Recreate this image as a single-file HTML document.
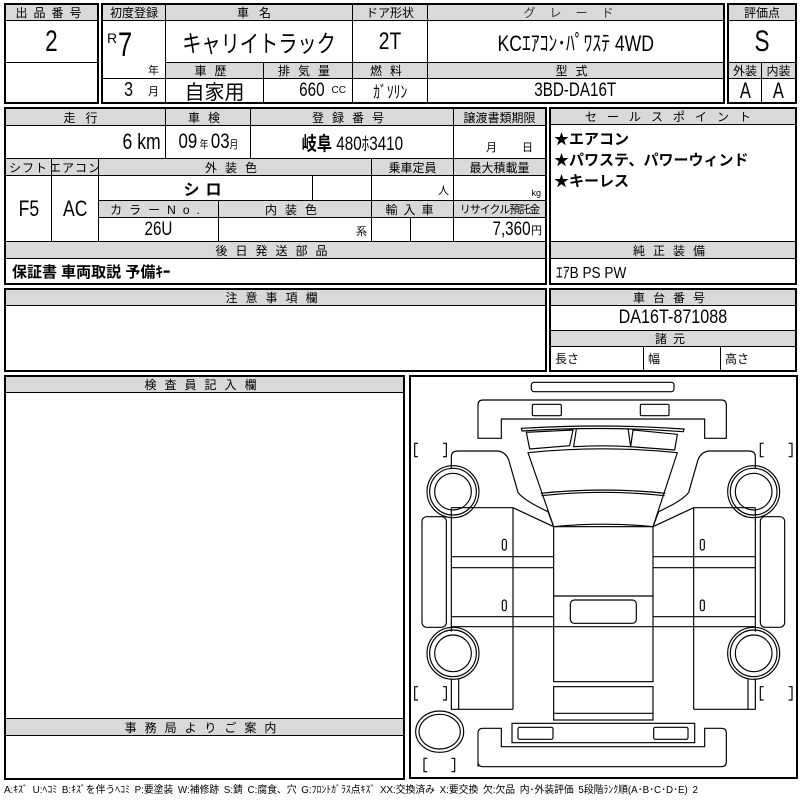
<!DOCTYPE html>
<html><head><meta charset="utf-8">
<style>
*{margin:0;padding:0;box-sizing:border-box}
body{width:800px;height:800px;background:#fff;position:relative;overflow:hidden;font-family:"Liberation Sans","Noto Sans CJK JP",sans-serif;color:#000}
.c{position:absolute;border:1px solid #000;display:flex;align-items:center;justify-content:center;white-space:nowrap;overflow:hidden}
.h{background:#d9d9d9;font-size:12px;letter-spacing:3px}
.o{position:absolute;border:2px solid #000;pointer-events:none}
</style></head><body>

<div class="c h" style="left:5px;top:4px;width:93px;height:17px;letter-spacing:6px">出品番号</div>
<div class="c" style="left:5px;top:20px;width:93px;height:43px;font-size:30px"><span style="transform:scaleX(.75);display:inline-block">2</span></div>
<div class="c" style="left:5px;top:62px;width:93px;height:41px"></div>
<div class="o" style="left:4px;top:3px;width:95px;height:101px"></div>

<div class="c h" style="left:102px;top:4px;width:64px;height:17px;letter-spacing:0">初度登録</div>
<div class="c h" style="left:165px;top:4px;width:188px;height:17px;letter-spacing:10px">車名</div>
<div class="c h" style="left:352px;top:4px;width:76px;height:17px;letter-spacing:0">ドア形状</div>
<div class="c h" style="left:427px;top:4px;width:297px;height:17px;letter-spacing:14px;color:#333">グレード</div>
<div class="c" style="left:102px;top:20px;width:64px;height:59px;border-bottom:none"></div>
<div style="position:absolute;left:107px;top:30px;font-size:14px">R</div>
<div style="position:absolute;left:118px;top:26px;font-size:34px;transform:scaleX(.75);transform-origin:left">7</div>
<div style="position:absolute;left:148px;top:62px;font-size:11px">年</div>
<div class="c" style="left:165px;top:20px;width:188px;height:43px;font-size:24px"><span style="transform:scaleX(.8);display:inline-block">キャリイトラック</span></div>
<div class="c" style="left:352px;top:20px;width:76px;height:43px;font-size:24px"><span style="transform:scaleX(.8);display:inline-block">2T</span></div>
<div class="c" style="left:427px;top:20px;width:297px;height:43px;font-size:22px"><span style="transform:scaleX(.8);display:inline-block">KCｴｱｺﾝ･ﾊﾟﾜｽﾃ 4WD</span></div>
<div class="c h" style="left:165px;top:62px;width:99px;height:17px;letter-spacing:8px">車歴</div>
<div class="c h" style="left:263px;top:62px;width:90px;height:17px;letter-spacing:8px">排気量</div>
<div class="c h" style="left:352px;top:62px;width:76px;height:17px;letter-spacing:8px">燃料</div>
<div class="c h" style="left:427px;top:62px;width:297px;height:17px;letter-spacing:8px">型式</div>
<div class="c" style="left:102px;top:78px;width:64px;height:25px;justify-content:flex-end;padding-right:6px"><span style="font-size:20px;margin-right:14px;transform:scaleX(.8);display:inline-block">3</span><span style="font-size:11px">月</span></div>
<div class="c" style="left:165px;top:78px;width:99px;height:25px;font-size:20px">自家用</div>
<div class="c" style="left:263px;top:78px;width:90px;height:25px;justify-content:flex-end;padding-right:6px"><span style="font-size:19px;transform:scaleX(.8);display:inline-block">660</span><span style="font-size:10px;margin-left:4px">CC</span></div>
<div class="c" style="left:352px;top:78px;width:76px;height:25px;font-size:17px"><span style="transform:scaleX(.8);display:inline-block">ｶﾞｿﾘﾝ</span></div>
<div class="c" style="left:427px;top:78px;width:297px;height:25px;font-size:19px"><span style="transform:scaleX(.8);display:inline-block">3BD-DA16T</span></div>
<div class="o" style="left:101px;top:3px;width:624px;height:101px"></div>

<div class="c h" style="left:728px;top:4px;width:68px;height:17px;letter-spacing:0">評価点</div>
<div class="c" style="left:728px;top:20px;width:68px;height:43px;font-size:30px"><span style="transform:scaleX(.75);display:inline-block">S</span></div>
<div class="c h" style="left:728px;top:62px;width:34px;height:17px;letter-spacing:0">外装</div>
<div class="c h" style="left:761px;top:62px;width:35px;height:17px;letter-spacing:0">内装</div>
<div class="c" style="left:728px;top:78px;width:34px;height:25px;font-size:22px"><span style="transform:scaleX(.75);display:inline-block">A</span></div>
<div class="c" style="left:761px;top:78px;width:35px;height:25px;font-size:22px"><span style="transform:scaleX(.75);display:inline-block">A</span></div>
<div class="o" style="left:727px;top:3px;width:70px;height:101px"></div>

<div class="c h" style="left:5px;top:108px;width:161px;height:18px;letter-spacing:10px">走行</div>
<div class="c h" style="left:165px;top:108px;width:86px;height:18px;letter-spacing:8px">車検</div>
<div class="c h" style="left:250px;top:108px;width:204px;height:18px;letter-spacing:8px">登録番号</div>
<div class="c h" style="left:453px;top:108px;width:93px;height:18px;letter-spacing:0">譲渡書類期限</div>
<div class="c" style="left:5px;top:125px;width:161px;height:34px;justify-content:flex-end;padding-right:4px;font-size:22px"><span style="transform:scaleX(.8);transform-origin:right;display:inline-block">6 km</span></div>
<div class="c" style="left:165px;top:125px;width:86px;height:34px;font-size:21px"><span style="transform:scaleX(.8);display:inline-block">09<small style="font-size:11px"> 年 </small>03<small style="font-size:11px">月</small></span></div>
<div class="c" style="left:250px;top:125px;width:204px;height:34px;font-size:19px"><span style="transform:scaleX(.8);display:inline-block"><b>岐阜</b> 480ﾎ3410</span></div>
<div class="c" style="left:453px;top:125px;width:93px;height:34px;align-items:flex-end;font-size:11px;padding-bottom:3px;padding-left:20px;word-spacing:22px">月 日</div>
<div class="c h" style="left:5px;top:158px;width:47px;height:18px;letter-spacing:1px">シフト</div>
<div class="c h" style="left:51px;top:158px;width:48px;height:18px;letter-spacing:1px">エアコン</div>
<div class="c h" style="left:98px;top:158px;width:274px;height:18px;letter-spacing:8px">外装色</div>
<div class="c h" style="left:371px;top:158px;width:83px;height:18px;letter-spacing:0">乗車定員</div>
<div class="c h" style="left:453px;top:158px;width:93px;height:18px;letter-spacing:0">最大積載量</div>
<div class="c" style="left:5px;top:175px;width:47px;height:67px;font-size:22px"><span style="transform:scaleX(.8);display:inline-block">F5</span></div>
<div class="c" style="left:51px;top:175px;width:48px;height:67px;font-size:22px"><span style="transform:scaleX(.8);display:inline-block">AC</span></div>
<div class="c" style="left:98px;top:175px;width:215px;height:26px;font-size:16px;font-weight:bold;letter-spacing:6px">シロ</div>
<div class="c" style="left:312px;top:175px;width:60px;height:26px"></div>
<div class="c" style="left:371px;top:175px;width:83px;height:26px;justify-content:flex-end;align-items:flex-end;font-size:11px;padding:0 4px 2px 0">人</div>
<div class="c" style="left:453px;top:175px;width:93px;height:26px;justify-content:flex-end;align-items:flex-end;font-size:9px;padding:0 4px 2px 0">kg</div>
<div class="c h" style="left:98px;top:200px;width:121px;height:18px;letter-spacing:7px">カラーNo.</div>
<div class="c h" style="left:218px;top:200px;width:154px;height:18px;letter-spacing:8px">内装色</div>
<div class="c h" style="left:371px;top:200px;width:83px;height:18px;letter-spacing:6px">輸入車</div>
<div class="c h" style="left:453px;top:200px;width:93px;height:18px;letter-spacing:-1px;font-size:11px">リサイクル預託金</div>
<div class="c" style="left:98px;top:217px;width:121px;height:25px;font-size:19px"><span style="transform:scaleX(.8);display:inline-block">26U</span></div>
<div class="c" style="left:218px;top:217px;width:154px;height:25px;justify-content:flex-end;align-items:flex-end;font-size:11px;padding:0 4px 2px 0">系</div>
<div class="c" style="left:371px;top:217px;width:40px;height:25px"></div>
<div class="c" style="left:410px;top:217px;width:44px;height:25px"></div>
<div class="c" style="left:453px;top:217px;width:93px;height:25px;justify-content:flex-end;padding-right:3px"><span style="font-size:19px;transform:scaleX(.8);transform-origin:right;display:inline-block">7,360</span><span style="font-size:11px">円</span></div>
<div class="c h" style="left:5px;top:241px;width:541px;height:18px;letter-spacing:8px">後日発送部品</div>
<div class="c" style="left:5px;top:258px;width:541px;height:26px;justify-content:flex-start;padding-left:6px;font-size:15px;font-weight:bold">保証書 車両取説 予備ｷｰ</div>
<div class="o" style="left:4px;top:107px;width:543px;height:178px"></div>

<div class="c h" style="left:550px;top:108px;width:246px;height:17px;letter-spacing:10px">セールスポイント</div>
<div class="c" style="left:550px;top:124px;width:246px;height:118px;display:block;padding:4px 0 0 3px;font-size:15px;font-weight:bold;line-height:21px">★エアコン<br>★パワステ、パワーウィンド<br>★キーレス</div>
<div class="c h" style="left:550px;top:241px;width:246px;height:18px;letter-spacing:8px">純正装備</div>
<div class="c" style="left:550px;top:258px;width:246px;height:26px;justify-content:flex-start;padding-left:5px;font-size:16px"><span style="transform:scaleX(.85);transform-origin:left;display:inline-block">ｴｱB PS PW</span></div>
<div class="o" style="left:549px;top:107px;width:248px;height:178px"></div>

<div class="c h" style="left:5px;top:289px;width:541px;height:17px;letter-spacing:8px">注意事項欄</div>
<div class="c" style="left:5px;top:305px;width:541px;height:66px"></div>
<div class="o" style="left:4px;top:288px;width:543px;height:84px"></div>

<div class="c h" style="left:550px;top:289px;width:246px;height:17px;letter-spacing:8px">車台番号</div>
<div class="c" style="left:550px;top:305px;width:246px;height:26px;font-size:19px"><span style="transform:scaleX(.85);display:inline-block">DA16T-871088</span></div>
<div class="c h" style="left:550px;top:330px;width:246px;height:17px;letter-spacing:6px">諸元</div>
<div class="c" style="left:550px;top:346px;width:94px;height:25px;justify-content:flex-start;padding-left:4px;font-size:12px">長さ</div>
<div class="c" style="left:643px;top:346px;width:78px;height:25px;justify-content:flex-start;padding-left:4px;font-size:12px">幅</div>
<div class="c" style="left:720px;top:346px;width:76px;height:25px;justify-content:flex-start;padding-left:4px;font-size:12px">高さ</div>
<div class="o" style="left:549px;top:288px;width:248px;height:84px"></div>

<div class="c h" style="left:5px;top:376px;width:399px;height:17px;letter-spacing:8px">検査員記入欄</div>
<div class="c" style="left:5px;top:392px;width:399px;height:327px"></div>
<div class="c h" style="left:5px;top:718px;width:399px;height:18px;letter-spacing:8px">事務局よりご案内</div>
<div class="c" style="left:5px;top:735px;width:399px;height:44px"></div>
<div class="o" style="left:4px;top:375px;width:401px;height:405px"></div>

<div class="o" style="left:409px;top:375px;width:389px;height:404px"></div>
<svg style="position:absolute;left:408px;top:375px" width="392" height="404" viewBox="0 0 1176 1212" fill="none" stroke="#000" stroke-width="3.5">
<rect x="370" y="22" width="428" height="28" rx="8"/>
<path d="M210 190 L210 90 Q210 75 225 75 L940 75 Q955 75 955 90 L955 190 L890 190 L890 132 L280 132 L280 190 Z"/>
<rect x="373" y="88" width="87" height="34" rx="4"/>
<rect x="697" y="88" width="86" height="34" rx="4"/>
<path d="M340 160 Q585 145 828 162 L826 170 Q585 152 342 168 Z"/>
<path d="M355 172 L495 165 L485 212 L365 222 Z"/>
<path d="M675 165 L808 178 L800 225 L668 215 Z"/>
<path d="M505 162 L497 215 Q585 210 668 215 L660 160"/>
<path d="M360 233 Q585 210 808 233 L735 455 Q585 440 437 455 Z"/>
<path d="M398 355 Q585 335 772 355 M400 362 Q585 342 770 362"/>
<rect x="437" y="455" width="298" height="465"/>
<line x1="437" y1="663" x2="735" y2="663"/>
<rect x="487" y="675" width="198" height="70" rx="12"/>
<line x1="130" y1="755" x2="1042" y2="755"/>
<rect x="437" y="935" width="298" height="100"/>
<line x1="437" y1="1015" x2="735" y2="1015"/>
<rect x="312" y="1045" width="548" height="58"/>
<rect x="330" y="1057" width="105" height="36" rx="5"/>
<rect x="737" y="1057" width="103" height="36" rx="5"/>
<path d="M210 1175 L210 1075 Q210 1060 225 1060 L280 1060 L280 1115 L890 1115 L890 1060 L940 1060 Q955 1060 955 1075 L955 1160 Q955 1175 940 1175 L225 1175 Q210 1175 210 1160"/>
<g>
<path d="M130 280 L130 245 Q130 228 150 228 L270 228 Q298 232 305 265 L330 352 Q345 375 420 410 L437 455"/>
<path d="M130 398 L315 398 L437 455"/>
<line x1="315" y1="398" x2="315" y2="1003"/>
<line x1="130" y1="398" x2="130" y2="755"/>
<line x1="130" y1="545" x2="437" y2="545"/>
<line x1="130" y1="578" x2="437" y2="578"/>
<line x1="130" y1="725" x2="437" y2="725"/>
<path d="M130 910 L130 1003 L315 1003 M152 910 L152 1003 M130 755 L130 770"/>
<rect x="283" y="493" width="12" height="32" rx="6"/>
<rect x="283" y="675" width="12" height="32" rx="6"/>
<rect x="42" y="425" width="73" height="332" rx="14"/>
<circle cx="135" cy="350" r="78"/><circle cx="135" cy="350" r="70"/><circle cx="135" cy="350" r="55"/>
<circle cx="135" cy="835" r="78"/><circle cx="135" cy="835" r="70"/><circle cx="135" cy="835" r="55"/>
<path d="M30 205 L20 205 L20 245 L30 245 M105 205 L115 205 L115 245 L105 245"/>
<path d="M30 935 L20 935 L20 975 L30 975 M105 935 L115 935 L115 975 L105 975"/>
</g>
<g transform="translate(1172,0) scale(-1,1)">
<path d="M130 280 L130 245 Q130 228 150 228 L270 228 Q298 232 305 265 L330 352 Q345 375 420 410 L437 455"/>
<path d="M130 398 L315 398 L437 455"/>
<line x1="315" y1="398" x2="315" y2="1003"/>
<line x1="130" y1="398" x2="130" y2="755"/>
<line x1="130" y1="545" x2="437" y2="545"/>
<line x1="130" y1="578" x2="437" y2="578"/>
<line x1="130" y1="725" x2="437" y2="725"/>
<path d="M130 910 L130 1003 L315 1003 M152 910 L152 1003 M130 755 L130 770"/>
<rect x="283" y="493" width="12" height="32" rx="6"/>
<rect x="283" y="675" width="12" height="32" rx="6"/>
<rect x="42" y="425" width="73" height="332" rx="14"/>
<circle cx="135" cy="350" r="78"/><circle cx="135" cy="350" r="70"/><circle cx="135" cy="350" r="55"/>
<circle cx="135" cy="835" r="78"/><circle cx="135" cy="835" r="70"/><circle cx="135" cy="835" r="55"/>
<path d="M30 205 L20 205 L20 245 L30 245 M105 205 L115 205 L115 245 L105 245"/>
<path d="M30 935 L20 935 L20 975 L30 975 M105 935 L115 935 L115 975 L105 975"/>
</g>
<ellipse cx="95" cy="1070" rx="72" ry="62"/><ellipse cx="95" cy="1070" rx="62" ry="52"/>
<path d="M58 1150 L48 1150 L48 1190 L58 1190 M130 1150 L140 1150 L140 1190 L130 1190"/>
</svg>

<div style="position:absolute;left:4px;top:781px;font-size:10px;white-space:nowrap;word-spacing:2px;transform:scaleX(.98);transform-origin:left">A:ｷｽﾞ U:ﾍｺﾐ B:ｷｽﾞを伴うﾍｺﾐ P:要塗装 W:補修跡 S:錆 C:腐食、穴 G:ﾌﾛﾝﾄｶﾞﾗｽ点ｷｽﾞ XX:交換済み X:要交換 欠:欠品 内･外装評価 5段階ﾗﾝｸ順(A･B･C･D･E) 2</div>
</body></html>
